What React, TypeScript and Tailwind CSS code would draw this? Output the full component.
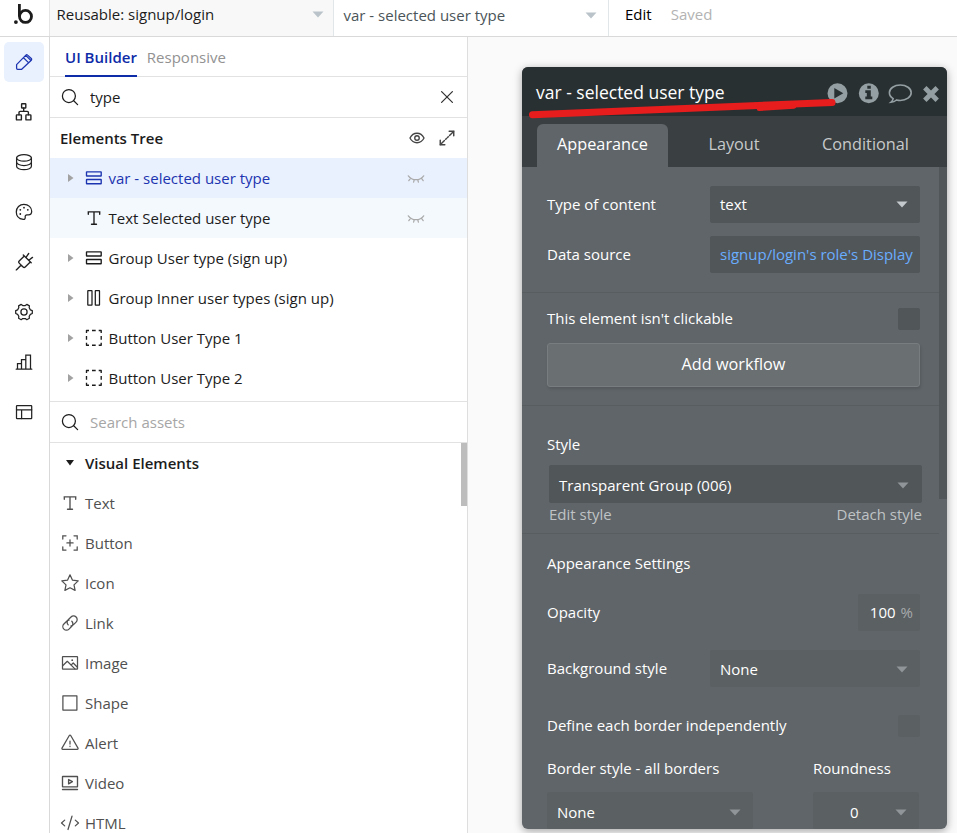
import { useState, type ReactNode } from "react";
import clsx from "clsx";

type IconProps = { className?: string };

function Svg({
  size = 20,
  stroke = 1.25,
  className,
  children,
}: {
  size?: number;
  stroke?: number;
  className?: string;
  children: ReactNode;
}) {
  return (
    <svg
      width={size}
      height={size}
      viewBox="0 0 20 20"
      fill="none"
      stroke="currentColor"
      strokeWidth={stroke}
      strokeLinecap="round"
      strokeLinejoin="round"
      className={clsx("shrink-0", className)}
    >
      {children}
    </svg>
  );
}

/* Icons */
const PencilIcon = () => (
  <Svg>
    <path d="M2.6 12.6 11.900 3.100a1.200 1.200 0 0 1 1.700 0l3.700 3.400a1.200 1.200 0 0 1 0 1.700L7.700 17.300H3.600a1 1 0 0 1-1-1zM9.500 5.700l5 4.900M11.700 3.400l5 4.900" />
  </Svg>
);

const SitemapIcon = () => (
  <Svg stroke={1.4}>
    <rect x="7.600" y="1.800" width="4.200" height="4.200" rx="0.500" />
    <rect x="2.400" y="12.900" width="5" height="5" rx="0.500" />
    <rect x="11.900" y="12.900" width="5" height="5" rx="0.500" />
    <path d="M9.700 6v3.400M5 12.800v-2.200a1.200 1.200 0 0 1 1.200-1.200h7a1.200 1.200 0 0 1 1.200 1.200v2.200" />
  </Svg>
);

const DatabaseIcon = () => (
  <Svg>
    <ellipse cx="10" cy="5.900" rx="7.400" ry="3.300" />
    <path d="M2.600 5.900v4.200c0 1.900 3.300 3.400 7.400 3.400s7.400-1.500 7.400-3.400V5.900M2.600 10.100v4.200c0 1.900 3.300 3.400 7.400 3.400s7.400-1.500 7.400-3.400v-4.200" />
  </Svg>
);

const PaletteIcon = () => (
  <Svg>
    <path d="M9.900 2.300c4.500 0 7.800 3.100 7.800 7 0 2.400-1.600 3.600-3.300 3.600h-1.500c-1.300 0-1.900 1-1.700 2 .3 1.500-.5 2.700-2 2.500C5 16.700 2.300 13.800 2.300 9.900c0-4.300 3.300-7.600 7.600-7.600z" />
    <g fill="currentColor" stroke="none">
      <circle cx="10" cy="5.700" r="0.900" />
      <circle cx="6.300" cy="7.800" r="0.900" />
      <circle cx="6.300" cy="12" r="0.900" />
      <circle cx="13.800" cy="7.800" r="0.900" />
    </g>
  </Svg>
);

const PlugIcon = () => (
  <Svg stroke={1.35}>
    <path d="M9.300 2.900l7.900 7.900M10.300 3.900 5.200 9a1.500 1.500 0 0 0 0 2.100l3.900 3.900a1.500 1.500 0 0 0 2.100 0l5.100-5.100M7 13.200 2.300 17.900M12 5.400l2.700-3.900M14.800 8.200l3.700-2.800" />
  </Svg>
);

const GearIcon = () => (
  <Svg>
    <circle cx="10" cy="10" r="3.100" />
    <path d="M7.200 2.400l1.500 1.200h2.600l1.500-1.200 2.600 1.500-.2 1.900 1.200 2.100 1.900.8v2.800l-1.900.8-1.200 2.100.2 1.900-2.600 1.400-1.500-1.200H8.700l-1.500 1.200-2.600-1.400.2-1.900-1.200-2.100-1.900-.8V8.700l1.900-.8 1.200-2.100-.2-1.900z" />
  </Svg>
);

const ChartIcon = () => (
  <Svg>
    <path d="M2.200 17.200h15.600M3.500 17v-5.400h4M7.500 17V7.600h4.200M11.800 17V3h4.700v14" strokeLinejoin="miter" />
  </Svg>
);

const TableIcon = () => (
  <Svg>
    <rect x="2.500" y="3.600" width="15.200" height="13" rx="0.600" />
    <path d="M2.500 7.800h15.200M7.600 7.800v8.800" />
  </Svg>
);

const SearchIcon = ({ className }: IconProps) => (
  <Svg className={className}>
    <circle cx="8.900" cy="9" r="6.500" />
    <path d="m13.700 13.700 3.900 3.900" />
  </Svg>
);

const EyeIcon = () => (
  <Svg size={18} stroke={1.5}>
    <path d="M2.200 10c1.600-3.200 4.400-5.300 7.800-5.300s6.200 2.100 7.800 5.300c-1.600 3.200-4.400 5.300-7.800 5.300S3.800 13.200 2.200 10z" />
    <circle cx="10" cy="10" r="2.500" />
  </Svg>
);

const ExpandIcon = () => (
  <Svg size={18} stroke={1.6}>
    <path d="M12.400 2.500h5.100v5.100M7.600 17.500H2.500v-5.100" strokeLinejoin="miter" />
    <path d="m17.300 2.700-4.500 4.500M11.500 8.500l-1 1M9.500 10.500l-1 1M7.200 12.800l-4.500 4.500" />
  </Svg>
);

const ClosedEyeIcon = () => (
  <Svg>
    <path d="M2.300 7.800C4.300 10.600 7 11.700 10 11.700s5.700-1.100 7.700-3.900M4.500 10.300l-1.700 2.400M8.300 11.600l-.7 2.600M11.700 11.600l.7 2.600M15.500 10.300l1.700 2.400" />
  </Svg>
);

const RowsIcon = () => (
  <Svg stroke={1.35}>
    <rect x="2.500" y="3.800" width="14.700" height="4.200" rx="0.300" />
    <rect x="2.500" y="11.500" width="14.700" height="4.200" rx="0.300" />
  </Svg>
);

const ColumnsIcon = () => (
  <Svg>
    <rect x="3.800" y="2.700" width="4.200" height="14.300" rx="0.300" />
    <rect x="11.300" y="2.700" width="4.200" height="14.300" rx="0.300" />
  </Svg>
);

const DashedIcon = () => (
  <Svg>
    <path
      d="M2.500 5V2.500H5M14.700 2.500h2.500V5M17.200 14.700v2.500h-2.500M5 17.200H2.500v-2.500M8 2.500h3.700M8 17.200h3.700M2.500 8v3.700M17.200 8v3.700"
      strokeLinecap="butt"
      strokeLinejoin="round"
      strokeWidth="1.350"
    />
  </Svg>
);

const TextIcon = () => (
  <Svg stroke={1.35}>
    <path d="M4.300 6.200V3.900h11.400v2.300M10 3.900v12.300M7.500 16.200h5" strokeLinejoin="miter" />
  </Svg>
);

const ButtonIcon = () => (
  <Svg>
    <path
      d="M2.800 6V2.800H6M14 2.800h3.200V6M17.200 13.800V17H14M6 17H2.800v-3.200M10 6.800v6.200M6.900 9.900h6.200"
      strokeLinejoin="miter"
    />
  </Svg>
);

const StarIcon = () => (
  <Svg>
    <path d="m10 1.800 2.500 5.400 5.700.7-4.200 4 1.100 5.500-5.100-2.600-5.100 2.600L6 11.900l-4.200-4 5.700-.7z" />
  </Svg>
);

const LinkIcon = () => (
  <Svg>
    <path d="M8.200 11.900a3.600 3.600 0 0 1 0-5.100L11 4a3.600 3.600 0 0 1 5.100 5.100l-2.800 2.800a3.600 3.600 0 0 1-2.300 1M11.800 8.200a3.600 3.600 0 0 1 0 5.100L9 16.100A3.600 3.600 0 0 1 3.900 11l2.800-2.800a3.600 3.600 0 0 1 2.300-1" />
  </Svg>
);

const ImageIcon = () => (
  <Svg>
    <rect x="2.500" y="3.500" width="15" height="12.700" rx="0.400" />
    <path d="m2.700 12.700 4.600-4.400 7.600 7.600M11 12.100l2.200-2.100 4.200 4.300" />
    <circle cx="12.200" cy="7.200" r="0.900" fill="currentColor" stroke="none" />
  </Svg>
);

const ShapeIcon = () => (
  <Svg>
    <rect x="2.900" y="2.800" width="14" height="14.200" />
  </Svg>
);

const AlertIcon = () => (
  <Svg>
    <path d="M9.300 2.500a.8.8 0 0 1 1.400 0l7.300 12.600a.8.8 0 0 1-.7 1.200H2.700a.8.8 0 0 1-.7-1.200zM10 8v3M10 13.200v.4" />
  </Svg>
);

const VideoIcon = () => (
  <Svg stroke={1.35}>
    <rect x="2.500" y="3.500" width="15" height="10.300" rx="0.300" />
    <path d="M2.500 16.500h15M8.600 6.500v4.400l3.800-2.200z" />
  </Svg>
);

const HtmlIcon = () => (
  <Svg>
    <path d="M4.700 7.100 1.500 10l3.200 2.900M15.300 7.100l3.200 2.900-3.200 2.900M12 3.200 8 16.500" />
  </Svg>
);

function Caret({ className }: IconProps) {
  return (
    <svg width="12" height="7" viewBox="0 0 12 7" fill="currentColor" className={clsx("shrink-0", className)}>
      <path d="M0.500 0.500h11L6 6.500z" />
    </svg>
  );
}

const sideItems = [
  PencilIcon,
  SitemapIcon,
  DatabaseIcon,
  PaletteIcon,
  PlugIcon,
  GearIcon,
  ChartIcon,
  TableIcon,
];

const treeItems = [
  { label: "var - selected user type", icon: RowsIcon, arrow: true, hidden: true },
  { label: "Text Selected user type", icon: TextIcon, arrow: false, hidden: true },
  { label: "Group User type (sign up)", icon: RowsIcon, arrow: true, hidden: false },
  { label: "Group Inner user types (sign up)", icon: ColumnsIcon, arrow: true, hidden: false },
  { label: "Button User Type 1", icon: DashedIcon, arrow: true, hidden: false },
  { label: "Button User Type 2", icon: DashedIcon, arrow: true, hidden: false },
];

const assets = [
  { label: "Text", icon: TextIcon },
  { label: "Button", icon: ButtonIcon },
  { label: "Icon", icon: StarIcon },
  { label: "Link", icon: LinkIcon },
  { label: "Image", icon: ImageIcon },
  { label: "Shape", icon: ShapeIcon },
  { label: "Alert", icon: AlertIcon },
  { label: "Video", icon: VideoIcon },
  { label: "HTML", icon: HtmlIcon },
];

function TopBar() {
  return (
    <header className="flex h-[37px] shrink-0 border-b border-[#d9d9d9] bg-white">
      <div className="w-[50px] border-r border-[#e4e4e4]">
        <svg width="49" height="36" viewBox="0 0 49 36" fill="none" stroke="#1c1c1c">
          <circle cx="25.500" cy="16.400" r="6" strokeWidth="2.800" />
          <path d="M19.400 4v12.400" strokeWidth="2.800" />
          <circle cx="15.900" cy="22.100" r="1.900" fill="#1c1c1c" stroke="none" />
        </svg>
      </div>
      <div className="flex w-[284px] items-center justify-between border-r border-[#e1e6e8] bg-[#f8f8f8] pr-[9px] pb-[7px] pl-[6.500px]">
        <span>Reusable: signup/login</span>
        <Caret className="text-[#b9c3c9]" />
      </div>
      <div className="flex w-[275px] items-center justify-between border-r border-[#e1e6e8] pr-[11px] pb-[5px] pl-[9.500px] text-[#4b5559]">
        <span>var - selected user type</span>
        <Caret className="text-[#b9c3c9]" />
      </div>
      <div className="flex items-center gap-[19px] pb-[7px] pl-4">
        <span className="text-black">Edit</span>
        <span className="text-[#b3b3b3]">Saved</span>
      </div>
    </header>
  );
}

function SideNav() {
  return (
    <nav className="flex w-[50px] shrink-0 flex-col items-center gap-[10px] border-r border-[#d9d9d9] bg-white pt-[5px] pr-px text-[#222]">
      {sideItems.map((Icon, i) => (
        <button
          key={i}
          className={clsx(
            "flex size-10 items-center justify-center rounded-[5px]",
            i === 0 && "bg-[#e9f1fe] text-[#1c34b0]"
          )}
        >
          <Icon />
        </button>
      ))}
    </nav>
  );
}

function LeftPanel() {
  const [query, setQuery] = useState("type");

  return (
    <aside className="flex w-[418px] shrink-0 flex-col border-r border-[#dedede] bg-white">
      {/* Tabs */}
      <div className="flex h-10 shrink-0 gap-[10px] border-b border-[#e2e2e2] pl-[15px]">
        <button className="h-10 border-b-2 border-[#0e2ba8] pt-[2px] font-semibold text-[#0e2ba8]">UI Builder</button>
        <button className="h-10 border-b-2 border-transparent pt-[2px] text-[#929292]">Responsive</button>
      </div>

      <div className="flex h-[41px] shrink-0 items-center border-b border-[#e2e2e2] pr-[11px] pl-[10px]">
        <SearchIcon />
        <input
          value={query}
          onChange={(e) => setQuery(e.target.value)}
          className="ml-[10px] min-w-0 flex-1 outline-none"
        />
        <Svg size={18} stroke={1.4} className="text-[#333]">
          <path d="m4 4 12 12M16 4 4 16" />
        </Svg>
      </div>

      {/* Elements tree */}
      <div className="flex h-10 shrink-0 items-center gap-3 pr-[11px] pl-[10px] text-[#444]">
        <h2 className="flex-1 font-semibold text-[#1c1c1c]">Elements Tree</h2>
        <EyeIcon />
        <ExpandIcon />
      </div>
      <div className="h-[243px] shrink-0">
        {treeItems.map(({ label, icon: Icon, arrow, hidden }, i) => (
          <div
            key={label}
            className={clsx(
              "flex h-10 items-center pr-[41px] pl-[17px]",
              i === 0 && "bg-[#e9f1fe] text-[#1c34b0]",
              i === 1 && "bg-[#f4f9fe]"
            )}
          >
            <svg width="7" height="8" viewBox="0 0 7 8" className="mr-[10px] text-[#a2a2a2]" fill="currentColor">
              {arrow && <path d="M1 0l5.500 4L1 8z" />}
            </svg>
            <Icon />
            <span className="ml-[4.500px] flex-1">{label}</span>
            {hidden && (
              <span className="text-[#aaa]">
                <ClosedEyeIcon />
              </span>
            )}
          </div>
        ))}
      </div>

      <div className="flex h-[42px] shrink-0 items-center border-y border-[#e2e2e2] pl-[10px]">
        <SearchIcon />
        <input placeholder="Search assets" className="ml-[10px] outline-none placeholder:text-[#a6a6a6]" />
      </div>

      {/* Assets */}
      <div className="flex min-h-0 flex-1">
        <div className="flex-1">
          <div className="flex h-10 items-center pl-[15px] font-semibold">
            <svg width="10" height="6" viewBox="0 0 10 6" fill="#1c1c1c">
              <path d="M1 0h8L5 5.500z" />
            </svg>
            <span className="ml-[10px]">Visual Elements</span>
          </div>
          {assets.map(({ label, icon: Icon }) => (
            <div key={label} className="flex h-10 items-center gap-[5px] pl-[10px] text-[#505050]">
              <Icon />
              <span>{label}</span>
            </div>
          ))}
        </div>
        <div className="h-[63px] w-[6px] bg-[#bdbdbd]" />
      </div>
    </aside>
  );
}

function Select({ value, className, caret }: { value: string; className?: string; caret?: string }) {
  return (
    <div className={clsx("flex items-center justify-between rounded-[2px] pl-[10px]", className)}>
      <span>{value}</span>
      <Caret className={caret ?? "text-[#8f9598]"} />
    </div>
  );
}

function HeaderIcons() {
  return (
    <svg width="114" height="28" viewBox="0 0 114 28" fill="#949fa3">
      <path fillRule="evenodd" d="M10.500 5.300a10 10 0 1 0 0 20 10 10 0 0 0 0-20zM7.300 10v10.600l9-5.300z" />
      <path
        fillRule="evenodd"
        d="M41.800 5.300a10 10 0 1 0 0 20 10 10 0 0 0 0-20zM40.300 7.800h3.500v3h-3.500zM38.300 12.300h5.500v6.200h1.500v2.800h-7v-2.800h1.500v-3.400h-1.500z"
      />
      <path
        d="M73.300 7c-6 0-10.900 3.400-10.900 7.700 0 2.400 1.500 4.500 3.800 5.900-.3 1.500-1 2.600-2.300 3.700 2.300-.2 4.100-1 5.600-2.300 1.200.3 2.500.5 3.800.5 6 0 10.900-3.500 10.900-7.800S79.300 7 73.300 7z"
        fill="none"
        stroke="#949fa3"
        strokeWidth="1.600"
      />
      <path d="m97.800 9.800 12.400 12.400M110.200 9.800 97.800 22.200" fill="none" stroke="#949fa3" strokeWidth="4.800" />
    </svg>
  );
}

function PropertyEditor() {
  return (
    <section className="relative mt-[30px] ml-[54px] flex h-[762px] w-[425px] flex-col rounded-[6px] bg-[#606569] text-white shadow-[0_2px_8px_rgba(0,0,0,0.35)]">
      <div className="flex h-[49px] shrink-0 items-center rounded-t-[6px] bg-[#293032] pr-[6px] pl-[14px] text-[17.500px]">
        <h1 className="flex-1 pt-[2px]">var - selected user type</h1>
        <HeaderIcons />
      </div>

      <div className="flex h-[51px] shrink-0 bg-[#3a3f41] pt-2 pl-[15px] text-[16.250px] text-[#c7cacb]">
        <button className="w-[131px] rounded-t-[6px] bg-[#606569] pb-[2px] text-white">Appearance</button>
        <button className="w-[132px] pb-[2px]">Layout</button>
        <button className="w-[131px] pb-[2px]">Conditional</button>
      </div>

      <div className="flex min-h-0 flex-1">
        <div className="flex w-[417px] flex-col">
          <div className="flex h-[126px] flex-col gap-[13px] border-b border-[#585d60] pt-[19px] pr-[19px] pl-[25px]">
            <div className="flex h-[37px] items-center justify-between">
              <span>Type of content</span>
              <Select value="text" className="h-[37px] w-[210px] bg-[#515659] pr-3" caret="text-[#c3c9cc]" />
            </div>
            <div className="flex h-[37px] items-center justify-between">
              <span>Data source</span>
              <div className="flex h-[37px] w-[210px] items-center overflow-hidden rounded-[2px] bg-[#515659] pl-[10px] whitespace-nowrap text-[#69adff]">
                signup/login's role's Display
              </div>
            </div>
          </div>

          <div className="h-[113px] border-b border-[#585d60] pt-[15px] pr-[19px] pl-[25px]">
            <div className="flex h-[22px] items-center justify-between">
              <span className="pb-[2px]">This element isn't clickable</span>
              <div className="size-[22px] rounded-[2px] bg-[#515659]" />
            </div>
            <button className="mt-[13px] h-11 w-full rounded-[3px] border border-[#787d80] bg-[#6a6f71] pb-[2px] text-[16.250px] shadow-[1px_2px_3px_rgba(0,0,0,0.12)]">
              Add workflow
            </button>
          </div>

          <div className="h-32 border-b border-[#585d60] pt-[28px] pr-[17px] pl-[25px]">
            <div className="flex h-[22px] items-center pb-[2px]">Style</div>
            <div className="mt-[9px] ml-[2px]">
              <Select value="Transparent Group (006)" className="h-[38px] bg-[#515659] pt-[2px] pr-[13px]" />
              <div className="flex h-[23px] items-center justify-between text-[#bfc3c5]">
                <span>Edit style</span>
                <span>Detach style</span>
              </div>
            </div>
          </div>

          <div className="pt-[18px] pr-[19px] pl-[25px]">
            <div className="flex h-6 items-center pb-[2px]">Appearance Settings</div>
            <div className="mt-[18px] flex h-[37px] items-center justify-between">
              <span>Opacity</span>
              <div className="flex h-[37px] w-[62px] items-center justify-end gap-[5px] rounded-[2px] bg-[#5b6062] pr-[7px]">
                <span>100</span>
                <span className="text-[#a7abad]">%</span>
              </div>
            </div>
            <div className="mt-[19px] flex h-[37px] items-center justify-between">
              <span>Background style</span>
              <Select value="None" className="h-[37px] w-[210px] bg-[#5b6062] pt-[2px] pr-3" />
            </div>
            <div className="mt-7 flex h-[22px] items-center justify-between">
              <span className="pb-[2px]">Define each border independently</span>
              <div className="size-[22px] rounded-[2px] bg-[#5b6062]" />
            </div>
            <div className="mt-5 flex h-[22px] items-center">
              <span className="w-[266px]">Border style - all borders</span>
              <span>Roundness</span>
            </div>
            <div className="mt-[13px] flex justify-between pr-px">
              <Select value="None" className="h-[37px] w-[206px] bg-[#5b6062] pt-[3px] pr-3" />
              <div className="flex h-[37px] w-[106px] items-center justify-between rounded-[2px] bg-[#5b6062] pt-[3px] pr-3 pl-[37px]">
                <span>0</span>
                <Caret className="text-[#8f9598]" />
              </div>
            </div>
          </div>
        </div>
        <div className="h-[332px] w-2 bg-[#515659]" />
      </div>

      {/* Marker stroke under the title */}
      <svg
        width="320"
        height="24"
        viewBox="0 0 320 24"
        className="absolute top-[30px] left-[3px]"
        fill="none"
        stroke="#e71d1d"
        strokeLinecap="round"
      >
        <path d="M7.500 17.700 307 5.500" strokeWidth="7" />
        <path d="M234 11.800 269 9.500" strokeWidth="4.500" />
      </svg>
    </section>
  );
}

export default function App() {
  return (
    <div className="flex h-[833px] w-[957px] flex-col overflow-hidden bg-[#fafafa] font-['Open_Sans',sans-serif] text-[15px] text-[#1c1c1c]">
      <TopBar />
      <div className="flex min-h-0 flex-1">
        <SideNav />
        <LeftPanel />
        <main className="min-w-0 flex-1">
          <PropertyEditor />
        </main>
      </div>
    </div>
  );
}
